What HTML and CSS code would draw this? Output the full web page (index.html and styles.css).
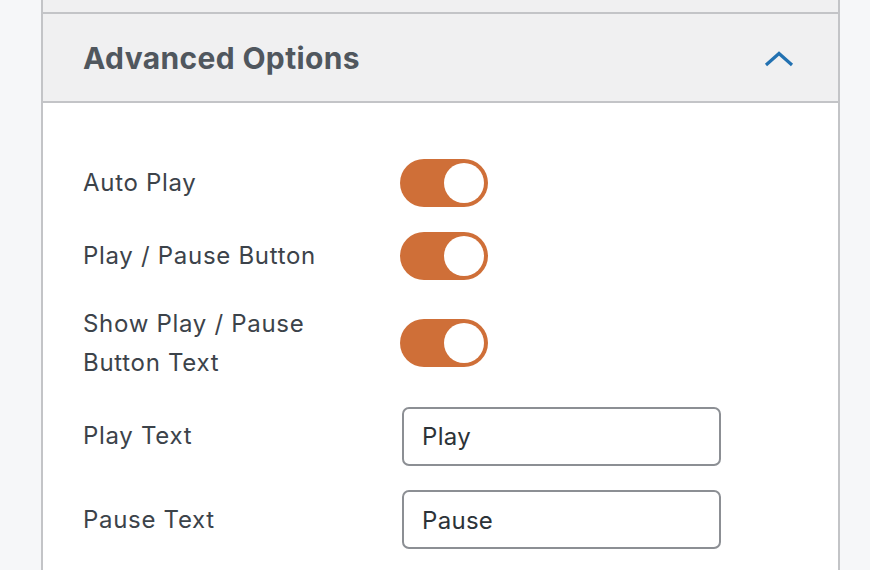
FILE: index.html
```html
<!DOCTYPE html>
<html>
<head>
<meta charset="utf-8">
<link rel="stylesheet" href="styles.css">
</head>
<body>
<div class="panel">
  <div class="prev"></div>
  <div class="head">
    <h2 class="title">Advanced Options</h2>
    <svg class="chev" width="30" height="16" viewBox="0 0 30 16"><path d="M2 14 L15 2.5 L28 14" fill="none" stroke="#2271b1" stroke-width="3.2"/></svg>
  </div>
  <div class="body">
    <div class="row">
      <div class="label">Auto Play</div>
      <div class="toggle"><span class="knob"></span></div>
    </div>
    <div class="row">
      <div class="label">Play / Pause Button</div>
      <div class="toggle"><span class="knob"></span></div>
    </div>
    <div class="row">
      <div class="label">Show Play / Pause Button Text</div>
      <div class="toggle"><span class="knob"></span></div>
    </div>
    <div class="row">
      <div class="label">Play Text</div>
      <input class="field" type="text" value="Play">
    </div>
    <div class="row">
      <div class="label">Pause Text</div>
      <input class="field" type="text" value="Pause">
    </div>
  </div>
</div>
</body>
</html>
```
FILE: styles.css
```css
html, body {
  margin: 0;
  padding: 0;
  background: #f6f7f9;
  font-family: Inter, "Liberation Sans", sans-serif;
}
.panel {
  margin-left: 41px;
  width: 799px;
  box-sizing: border-box;
  border-left: 2px solid #c3c4c7;
  border-right: 2px solid #c3c4c7;
  height: 570px;
  background: #fff;
  overflow: hidden;
}
.prev {
  height: 12px;
  background: #f0f0f1;
  border-bottom: 2px solid #c3c4c7;
}
.head {
  height: 87px;
  background: #f0f0f1;
  border-bottom: 2px solid #c3c4c7;
  display: flex;
  align-items: center;
  justify-content: space-between;
  padding: 0 44px 0 40px;
}
.title {
  margin: 0;
  font-size: 30px;
  font-weight: 700;
  color: #50575e;
  letter-spacing: 0.35px;
}
.chev {
  display: block;
  margin-top: 2px;
}
.body {
  padding: 56px 40px 0 40px;
  display: flex;
  flex-direction: column;
  gap: 24.5px;
}
.row {
  display: flex;
  align-items: center;
}
.label {
  width: 317px;
  font-size: 24px;
  line-height: 38.5px;
  letter-spacing: 0.7px;
  color: #3c434a;
  padding: 1px 50px 0 0;
  box-sizing: border-box;
}
.toggle {
  width: 88px;
  height: 48px;
  border-radius: 24px;
  background: #cf6f38;
  box-sizing: border-box;
  padding: 4px;
  display: flex;
  justify-content: flex-end;
}
.knob {
  width: 40px;
  height: 40px;
  border-radius: 50%;
  background: #fff;
}
.field {
  width: 319px;
  height: 59px;
  margin: 0 0 0 2px;
  box-sizing: border-box;
  border: 2px solid #8c8f94;
  border-radius: 7px;
  padding: 1px 18px 0 18px;
  font-family: Inter, "Liberation Sans", sans-serif;
  font-size: 24px;
  letter-spacing: 0.3px;
  color: #2c3338;
  background: #fff;
}
```
